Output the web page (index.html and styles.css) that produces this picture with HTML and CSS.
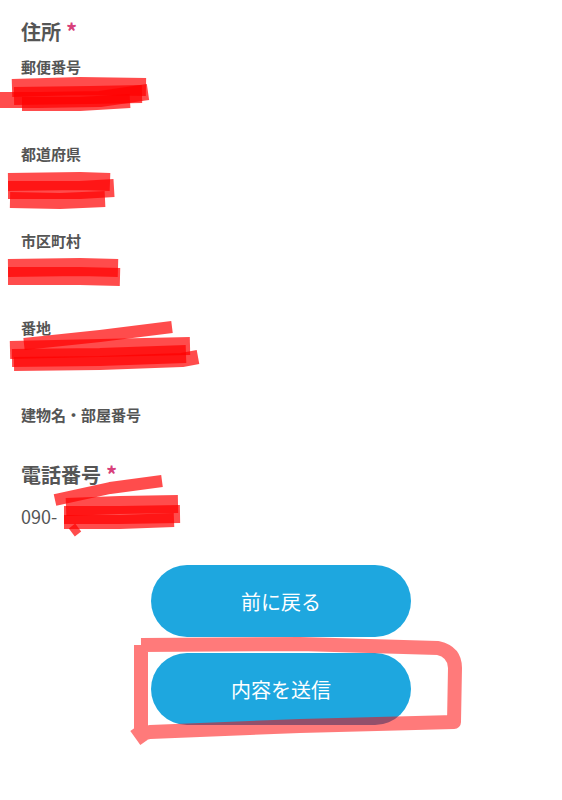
FILE: index.html
```html
<!DOCTYPE html>
<html lang="ja">
<head>
    <meta charset="UTF-8">
    <meta name="viewport" content="width=device-width, initial-scale=1.0">
    <title>お問い合わせ 確認</title>
    <link rel="stylesheet" href="styles.css">
</head>
<body>
    <div class="form-section">
        <h2 class="section-title">住所<span class="required">*</span></h2>
        <div class="field">
            <div class="field-label">郵便番号</div>
            <div class="field-value"></div>
        </div>
        <div class="field">
            <div class="field-label">都道府県</div>
            <div class="field-value"></div>
        </div>
        <div class="field">
            <div class="field-label">市区町村</div>
            <div class="field-value"></div>
        </div>
        <div class="field">
            <div class="field-label">番地</div>
            <div class="field-value"></div>
        </div>
        <div class="field">
            <div class="field-label">建物名・部屋番号</div>
        </div>
    </div>

    <div class="form-section">
        <h2 class="section-title">電話番号<span class="required">*</span></h2>
        <div class="phone-value">090-</div>
    </div>

    <div class="button-area">
        <button class="btn">前に戻る</button>
        <button class="btn">内容を送信</button>
    </div>

    <!-- hand drawn marks over the screenshot -->
    <svg class="marks" width="562" height="800" viewBox="0 0 562 800">
        <g class="redact">
            <polyline points="12,88 80,86 146,87" stroke-width="18"/>
            <polyline points="14,96 90,95 142,94" stroke-width="18"/>
            <polyline points="0,100 40,100 100,99 148,92" stroke-width="16"/>
            <polyline points="22,104 80,104 130,101" stroke-width="14"/>

            <polyline points="8,182 80,181 110,182" stroke-width="18"/>
            <polyline points="8,190 80,190 114,188" stroke-width="18"/>
            <polyline points="10,200 60,201 105,199" stroke-width="16"/>

            <polyline points="8,268 80,267 118,268" stroke-width="18"/>
            <polyline points="8,276 80,276 120,277" stroke-width="18"/>

            <polyline points="24,344 100,336 172,327" stroke-width="12"/>
            <polyline points="10,350 100,348 190,346" stroke-width="18"/>
            <polyline points="12,358 100,357 186,354" stroke-width="18"/>
            <polyline points="14,364 100,363 182,360 198,357" stroke-width="14"/>

            <polyline points="55,500 110,488 162,481" stroke-width="12"/>
            <polyline points="66,507 120,505 178,504" stroke-width="18"/>
            <polyline points="64,515 120,515 180,514" stroke-width="18"/>
            <polyline points="64,522 120,522 174,520" stroke-width="14"/>
            <polyline points="72,526 78,534" stroke-width="8"/>
        </g>
        <path class="circle" d="M141,645 L300,644 L438,648 Q455,652 455,668 L454,722 L300,726 L150,732 L141,734 L141,645 M136,727 L146,741"/>
    </svg>
</body>
</html>
```

FILE: styles.css
```css
body {
    margin: 0;
    padding: 18px 21px 40px;
    font-family: "Noto Sans CJK JP", "Noto Sans", sans-serif;
    color: #555;
    background-color: #fff;
    position: relative;
}
.section-title {
    margin: 0 0 10px;
    font-size: 20px;
    line-height: 28px;
    font-weight: bold;
}
.required {
    color: #d8407a;
    margin-left: 5px;
    font-size: 22px;
    line-height: 1;
}
.field {
    margin-bottom: 35px;
}
.field-label {
    font-size: 15px;
    line-height: 22px;
    font-weight: bold;
}
.field-value {
    height: 30px;
}
.phone-value {
    margin-top: 12px;
    font-size: 18px;
    line-height: 30px;
}
.button-area {
    display: flex;
    flex-direction: column;
    align-items: center;
    gap: 16px;
    margin-top: 34px;
}
.btn {
    width: 260px;
    height: 72px;
    border: none;
    border-radius: 36px;
    background-color: #1ea7df;
    color: #fff;
    font-family: "Noto Sans CJK JP", sans-serif;
    font-size: 20px;
    cursor: pointer;
}
.marks {
    position: absolute;
    top: 0;
    left: 0;
    pointer-events: none;
}
.redact polyline {
    fill: none;
    stroke: #ff0000;
    stroke-opacity: 0.7;
    stroke-linejoin: round;
}
.circle {
    fill: none;
    stroke: #ff0000;
    stroke-opacity: 0.52;
    stroke-width: 14;
    stroke-linejoin: round;
}
```
